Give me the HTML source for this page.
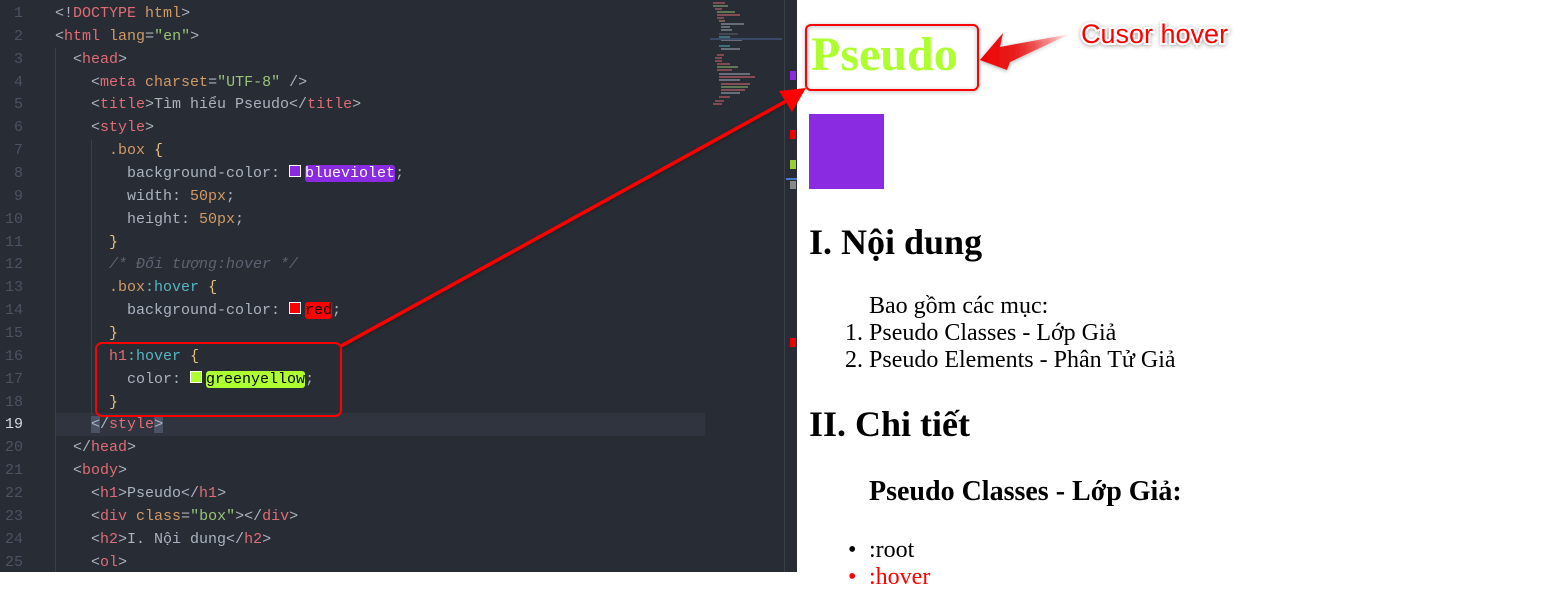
<!DOCTYPE html>
<html><head><meta charset="utf-8"><style>
body{margin:0;width:1566px;height:572px;overflow:hidden;position:relative;background:#fff}
#ed{position:absolute;left:0;top:0;width:797px;height:572px;background:#282c34;overflow:hidden}
.ln{position:absolute;left:0;width:23px;text-align:right;font:15px "Liberation Mono",monospace;color:#4b5263}
.cl{position:absolute;left:55px;white-space:pre;font:15px "Liberation Mono",monospace;color:#abb2bf}
.t{color:#e06c75}.a{color:#d19a66}.s{color:#98c379}.y{color:#e5c07b}.c{color:#56b6c2}.cm{color:#5c6370;font-style:italic}
.sw{display:inline-block;width:10px;height:10px;border:1px solid #fff;vertical-align:0px;margin-right:4px}
.hl{border-radius:3px}
.g{position:absolute;width:1px;background:#3b4048}
#wp{position:absolute;left:797px;top:0;width:769px;height:572px;background:#fff;font-family:"Liberation Serif",serif;color:#000}
#wp div{position:absolute;white-space:nowrap}
#lines{position:absolute;left:0;top:4px;width:797px;height:572px}
</style></head><body>
<div id="ed">
<div style="position:absolute;left:55px;top:413px;width:650px;height:23px;background:#2f343e"></div>
<div class="g" style="left:55px;top:48px;height:526px"></div>
<div class="g" style="left:91px;top:140px;height:275px"></div>
<div id="lines">
<div class="ln" style="top:1px">1</div><div class="ln" style="top:24px">2</div><div class="ln" style="top:47px">3</div><div class="ln" style="top:70px">4</div><div class="ln" style="top:92px">5</div><div class="ln" style="top:115px">6</div><div class="ln" style="top:138px">7</div><div class="ln" style="top:161px">8</div><div class="ln" style="top:184px">9</div><div class="ln" style="top:207px">10</div><div class="ln" style="top:230px">11</div><div class="ln" style="top:252px">12</div><div class="ln" style="top:275px">13</div><div class="ln" style="top:298px">14</div><div class="ln" style="top:321px">15</div><div class="ln" style="top:344px">16</div><div class="ln" style="top:367px">17</div><div class="ln" style="top:390px">18</div><div class="ln" style="top:412px;color:#d7dae0">19</div><div class="ln" style="top:435px">20</div><div class="ln" style="top:458px">21</div><div class="ln" style="top:481px">22</div><div class="ln" style="top:504px">23</div><div class="ln" style="top:527px">24</div><div class="ln" style="top:550px">25</div>
<div class="cl" style="top:1px">&lt;!<span class="t">DOCTYPE</span> <span class="a">html</span>&gt;</div>
<div class="cl" style="top:24px">&lt;<span class="t">html</span> <span class="a">lang</span>=<span class="s">"en"</span>&gt;</div>
<div class="cl" style="top:47px">  &lt;<span class="t">head</span>&gt;</div>
<div class="cl" style="top:70px">    &lt;<span class="t">meta</span> <span class="a">charset</span>=<span class="s">"UTF-8"</span> /&gt;</div>
<div class="cl" style="top:92px">    &lt;<span class="t">title</span>&gt;Tìm hiểu Pseudo&lt;/<span class="t">title</span>&gt;</div>
<div class="cl" style="top:115px">    &lt;<span class="t">style</span>&gt;</div>
<div class="cl" style="top:138px">      <span class="a">.box</span> <span class="y">{</span></div>
<div class="cl" style="top:161px">        background-color: <span class="sw" style="background:#8a2be2"></span><span class="hl" style="background:#8a2be2;color:#fff">blueviolet</span>;</div>
<div class="cl" style="top:184px">        width: <span class="a">50px</span>;</div>
<div class="cl" style="top:207px">        height: <span class="a">50px</span>;</div>
<div class="cl" style="top:230px">      <span class="y">}</span></div>
<div class="cl cm" style="top:252px">      /* Đối tượng:hover */</div>
<div class="cl" style="top:275px">      <span class="a">.box</span><span class="c">:hover</span> <span class="y">{</span></div>
<div class="cl" style="top:298px">        background-color: <span class="sw" style="background:#f00"></span><span class="hl" style="background:#f00;color:#000">red</span>;</div>
<div class="cl" style="top:321px">      <span class="y">}</span></div>
<div class="cl" style="top:344px">      <span class="t">h1</span><span class="c">:hover</span> <span class="y">{</span></div>
<div class="cl" style="top:367px">        color: <span class="sw" style="background:#adff2f"></span><span class="hl" style="background:#adff2f;color:#000">greenyellow</span>;</div>
<div class="cl" style="top:390px">      <span class="y">}</span></div>
<div class="cl" style="top:412px">    <span style="background:#4b5263">&lt;</span>/<span class="t">style</span><span style="background:#4b5263">&gt;</span></div>
<div class="cl" style="top:435px">  &lt;/<span class="t">head</span>&gt;</div>
<div class="cl" style="top:458px">  &lt;<span class="t">body</span>&gt;</div>
<div class="cl" style="top:481px">    &lt;<span class="t">h1</span>&gt;Pseudo&lt;/<span class="t">h1</span>&gt;</div>
<div class="cl" style="top:504px">    &lt;<span class="t">div</span> <span class="a">class</span>=<span class="s">"box"</span>&gt;&lt;/<span class="t">div</span>&gt;</div>
<div class="cl" style="top:527px">    &lt;<span class="t">h2</span>&gt;I. Nội dung&lt;/<span class="t">h2</span>&gt;</div>
<div class="cl" style="top:550px">    &lt;<span class="t">ol</span>&gt;</div>
</div>
<svg style="position:absolute;left:710px;top:0" width="87" height="572">
<g stroke-width="1.2" opacity="0.8">
<line x1="3" y1="3" x2="15" y2="3" stroke="#e06c75"/><line x1="3" y1="6" x2="18" y2="6" stroke="#98c379"/><line x1="5" y1="9" x2="12" y2="9" stroke="#e06c75"/>
<line x1="7" y1="12" x2="25" y2="12" stroke="#98c379"/><line x1="7" y1="15" x2="30" y2="15" stroke="#e06c75"/><line x1="7" y1="18" x2="14" y2="18" stroke="#e06c75"/>
<line x1="9" y1="21" x2="15" y2="21" stroke="#d19a66"/><line x1="11" y1="24" x2="34" y2="24" stroke="#abb2bf"/><line x1="11" y1="27" x2="20" y2="27" stroke="#abb2bf"/><line x1="11" y1="30" x2="22" y2="30" stroke="#abb2bf"/>
<line x1="9" y1="34" x2="28" y2="34" stroke="#5c6370"/><line x1="9" y1="37" x2="20" y2="37" stroke="#56b6c2"/><line x1="11" y1="40" x2="32" y2="40" stroke="#abb2bf"/>
<line x1="9" y1="46" x2="20" y2="46" stroke="#56b6c2"/><line x1="11" y1="49" x2="30" y2="49" stroke="#abb2bf"/>
<line x1="7" y1="55" x2="14" y2="55" stroke="#e06c75"/><line x1="5" y1="58" x2="12" y2="58" stroke="#e06c75"/><line x1="5" y1="61" x2="12" y2="61" stroke="#e06c75"/>
<line x1="7" y1="64" x2="20" y2="64" stroke="#e06c75"/><line x1="7" y1="67" x2="28" y2="67" stroke="#98c379"/><line x1="7" y1="70" x2="22" y2="70" stroke="#e06c75"/>
<line x1="9" y1="74" x2="40" y2="74" stroke="#abb2bf"/><line x1="9" y1="77" x2="45" y2="77" stroke="#e06c75"/><line x1="9" y1="80" x2="30" y2="80" stroke="#abb2bf"/>
<line x1="11" y1="84" x2="40" y2="84" stroke="#e06c75"/><line x1="11" y1="87" x2="38" y2="87" stroke="#98c379"/><line x1="11" y1="90" x2="35" y2="90" stroke="#e06c75"/><line x1="11" y1="93" x2="30" y2="93" stroke="#abb2bf"/><line x1="9" y1="97" x2="20" y2="97" stroke="#e06c75"/><line x1="5" y1="101" x2="14" y2="101" stroke="#e06c75"/><line x1="3" y1="104" x2="12" y2="104" stroke="#e06c75"/>
</g>
<rect x="0" y="38" width="72" height="2" fill="#3a4a66"/>
<rect x="74" y="0" width="1" height="572" fill="#3b4048"/>
<rect x="80" y="71" width="6" height="9" fill="#8a2be2"/>
<rect x="80" y="130" width="6" height="9" fill="#e00"/>
<rect x="80" y="160" width="6" height="9" fill="#9acd32"/>
<rect x="76" y="178" width="11" height="2" fill="#4a78c8"/>
<rect x="80" y="181" width="6" height="8" fill="#888"/>
<rect x="80" y="338" width="6" height="9" fill="#e00"/>
</svg>
</div>
<div id="wp">
<div style="left:14px;top:25px;font-size:48px;font-weight:bold;color:#adff2f;line-height:60px">Pseudo</div>
<div style="left:12px;top:114px;width:75px;height:75px;background:#8a2be2"></div>
<div style="left:12px;top:220px;font-size:36px;font-weight:bold;line-height:45px">I. Nội dung</div>
<div style="left:72px;top:293px;font-size:24px;line-height:27px">Bao gồm các mục:</div>
<div style="left:48px;top:320px;font-size:24px;line-height:27px">1. Pseudo Classes - Lớp Giả</div>
<div style="left:48px;top:347px;font-size:24px;line-height:27px">2. Pseudo Elements - Phân Tử Giả</div>
<div style="left:12px;top:402px;font-size:36px;font-weight:bold;line-height:45px">II. Chi tiết</div>
<div style="left:72px;top:475px;font-size:28px;font-weight:bold;line-height:34px">Pseudo Classes - Lớp Giả:</div>
<div style="left:51px;top:537px;font-size:24px;line-height:27px">•</div>
<div style="left:72px;top:537px;font-size:24px;line-height:27px">:root</div>
<div style="left:51px;top:564px;font-size:24px;line-height:27px;color:#f00">•</div>
<div style="left:72px;top:564px;font-size:24px;line-height:27px;color:#f00">:hover</div>
</div>
<svg style="position:absolute;left:0;top:0" width="1566" height="572">
<defs><linearGradient id="gr" x1="1" y1="0" x2="0" y2="0"><stop offset="0" stop-color="#f00" stop-opacity="0"/><stop offset="0.6" stop-color="#e82020"/><stop offset="1" stop-color="#e00"/></linearGradient>
<filter id="sh"><feDropShadow dx="0" dy="1" stdDeviation="2" flood-opacity="0.35"/></filter></defs>
<rect x="96" y="343" width="245" height="73" rx="6" fill="none" stroke="#f00" stroke-width="2"/>
<line x1="341" y1="346" x2="790" y2="99" stroke="#f00" stroke-width="3.5" filter="url(#sh)"/>
<polygon points="806,88 779,91 792,112" fill="#f00"/>
<rect x="806" y="25" width="172" height="65" rx="5" fill="none" stroke="#f00" stroke-width="2" filter="url(#sh)"/>
<polygon points="980,60 1003,33 1000,47 1070,34 1010,62 1007,70" fill="url(#gr)" filter="url(#sh)"/>
<text x="1081" y="43" font-family="Liberation Sans,Arial,sans-serif" font-size="27" fill="#f00" stroke="#fff" stroke-width="4" paint-order="stroke" filter="url(#sh)">Cusor hover</text>
</svg>
</body></html>
